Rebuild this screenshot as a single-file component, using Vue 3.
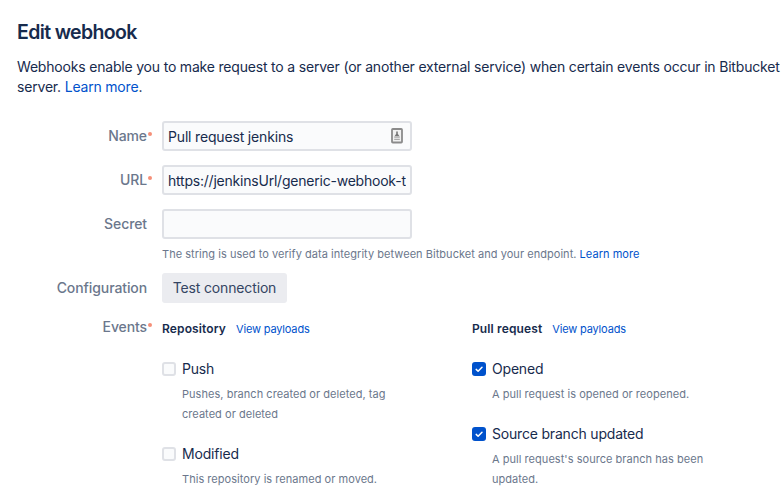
<script setup>
import { ref } from 'vue'

const name = ref('Pull request jenkins')
const url = ref('https://jenkinsUrl/generic-webhook-t')
const secret = ref('')

const groups = [
  {
    title: 'Repository',
    kind: 'repository',
    events: [
      { label: 'Push', lines: ['Pushes, branch created or deleted, tag', 'created or deleted'], checked: false },
      { label: 'Modified', lines: ['This repository is renamed or moved.'], checked: false },
    ],
  },
  {
    title: 'Pull request',
    kind: 'pull',
    events: [
      { label: 'Opened', lines: ['A pull request is opened or reopened.'], checked: true },
      { label: 'Source branch updated', lines: ["A pull request's source branch has been", 'updated.'], checked: true },
    ],
  },
]
</script>

<template>
  <main class="page">
    <h1>Edit webhook</h1>
    <p class="intro">
      <span>Webhooks enable you to make request to a server (or another external service) when certain events occur in Bitbucket</span><br>
      <span>server. <a>Learn more</a>.</span>
    </p>

    <div class="row">
      <label>Name<i class="req"></i></label>
      <div class="field">
        <input v-model="name" type="text">
        <svg class="autofill" width="12" height="16" viewBox="0 0 12 16">
          <rect x="1" y="1" width="10" height="13.5" rx="0.8" fill="#f1f1f1" stroke="#8b8b8b" stroke-width="1.8" />
          <path d="M5.2 3.5h1.6v2.2l1.7 2.5h-5l1.7-2.5z" fill="#777" />
          <path d="M3.2 9.2h5.6M3.2 11.3h5.6" stroke="#aaa" stroke-width="1.2" />
        </svg>
      </div>
    </div>
    <div class="row">
      <label>URL<i class="req"></i></label>
      <div class="field"><input v-model="url" class="url" type="text"></div>
    </div>
    <div class="row secret">
      <label>Secret</label>
      <div class="field"><input v-model="secret" type="text"></div>
    </div>
    <p class="help">The string is used to verify data integrity between Bitbucket and your endpoint. <a>Learn more</a></p>

    <div class="row config">
      <label>Configuration</label>
      <button type="button">Test connection</button>
    </div>

    <div class="events">
      <label>Events<i class="req"></i></label>
      <section v-for="g in groups" :key="g.kind" class="group">
        <header><strong>{{ g.title }}</strong><a>View payloads</a></header>
        <div v-for="e in g.events" :key="e.label" class="event">
          <div class="choice">
            <span class="box" :class="{ on: e.checked }">
              <svg v-if="e.checked" width="14" height="14" viewBox="0 0 14 14">
                <path d="M4.2 7.4l1.9 1.8 3.9-4" fill="none" stroke="#fff" stroke-width="1.5" stroke-linecap="round" stroke-linejoin="round" />
              </svg>
            </span>
            <span>{{ e.label }}</span>
          </div>
          <div class="desc">
            <div v-for="l in e.lines" :key="l">{{ l }}</div>
          </div>
        </div>
      </section>
    </div>
  </main>
</template>

<style>
body { background: #fff; overflow: hidden; }
</style>

<style scoped>
.page {
  box-sizing: border-box;
  width: 781px;
  height: 503px;
  overflow: hidden;
  padding: 20px 0 0 17px;
  font: 14px/20px Inter, sans-serif;
  letter-spacing: -0.19px;
  color: #172b4d;
}
h1 { margin: 0; font-size: 19.5px; line-height: 24px; font-weight: 600; letter-spacing: -0.65px; }
p { margin: 0; }
a { color: #0052cc; }
.intro { margin-top: 13px; white-space: nowrap; }
.row { display: flex; height: 30px; margin-bottom: 14px; }
.intro + .row { margin-top: 24px; }
label {
  position: relative;
  flex: none;
  width: 130px;
  margin-right: 15px;
  text-align: right;
  line-height: 30px;
  font-weight: 500;
  letter-spacing: -0.1px;
  color: #6b778c;
}
.req {
  position: absolute;
  left: 131px;
  top: 11px;
  width: 4px;
  height: 4px;
  border-radius: 50%;
  background: #f58f78;
}
.field { position: relative; width: 250px; height: 30px; }
input {
  box-sizing: border-box;
  width: 250px;
  height: 30px;
  border: 2px solid #dfe1e6;
  border-radius: 3px;
  padding: 0 4px;
  background: #fafbfc;
  font: 14px/20px Inter, sans-serif;
  letter-spacing: -0.17px;
  color: #172b4d;
  outline: none;
}
.url { letter-spacing: -0.22px; }
.autofill { position: absolute; left: 229px; top: 7px; }
.row.secret { margin-bottom: 5px; }
.help { padding-left: 145px; font-size: 11px; line-height: 20px; letter-spacing: 0.04px; color: #6b778c; white-space: nowrap; }
.row.config { margin: 9px 0 16px; }
button {
  width: 125px;
  height: 30px;
  border: 0;
  border-radius: 3px;
  padding: 0;
  background: #ebecf0;
  font: 14px/30px Inter, sans-serif;
  letter-spacing: -0.15px;
  color: #344563;
}
.events { display: flex; }
.events > label { line-height: 20px; margin-top: -2px; }
.events .req { top: 6px; }
.group { width: 310px; flex: none; }
header { display: flex; gap: 10px; height: 20px; font-size: 12px; margin-bottom: 20px; }
header strong { font-weight: 600; letter-spacing: 0.13px; }
header a { font-size: 11px; line-height: 21px; letter-spacing: -0.17px; }
.event { margin-bottom: 20px; }
.choice { display: flex; align-items: center; gap: 6px; height: 20px; }
.box { box-sizing: border-box; width: 14px; height: 14px; border: 2px solid #dfe1e6; border-radius: 3px; background: #fafbfc; }
.box.on { border: 0; background: #0052cc; }
.box svg { display: block; }
.desc { padding: 5px 0 0 20px; font-size: 11px; letter-spacing: 0.04px; color: #6b778c; white-space: nowrap; }
</style>
